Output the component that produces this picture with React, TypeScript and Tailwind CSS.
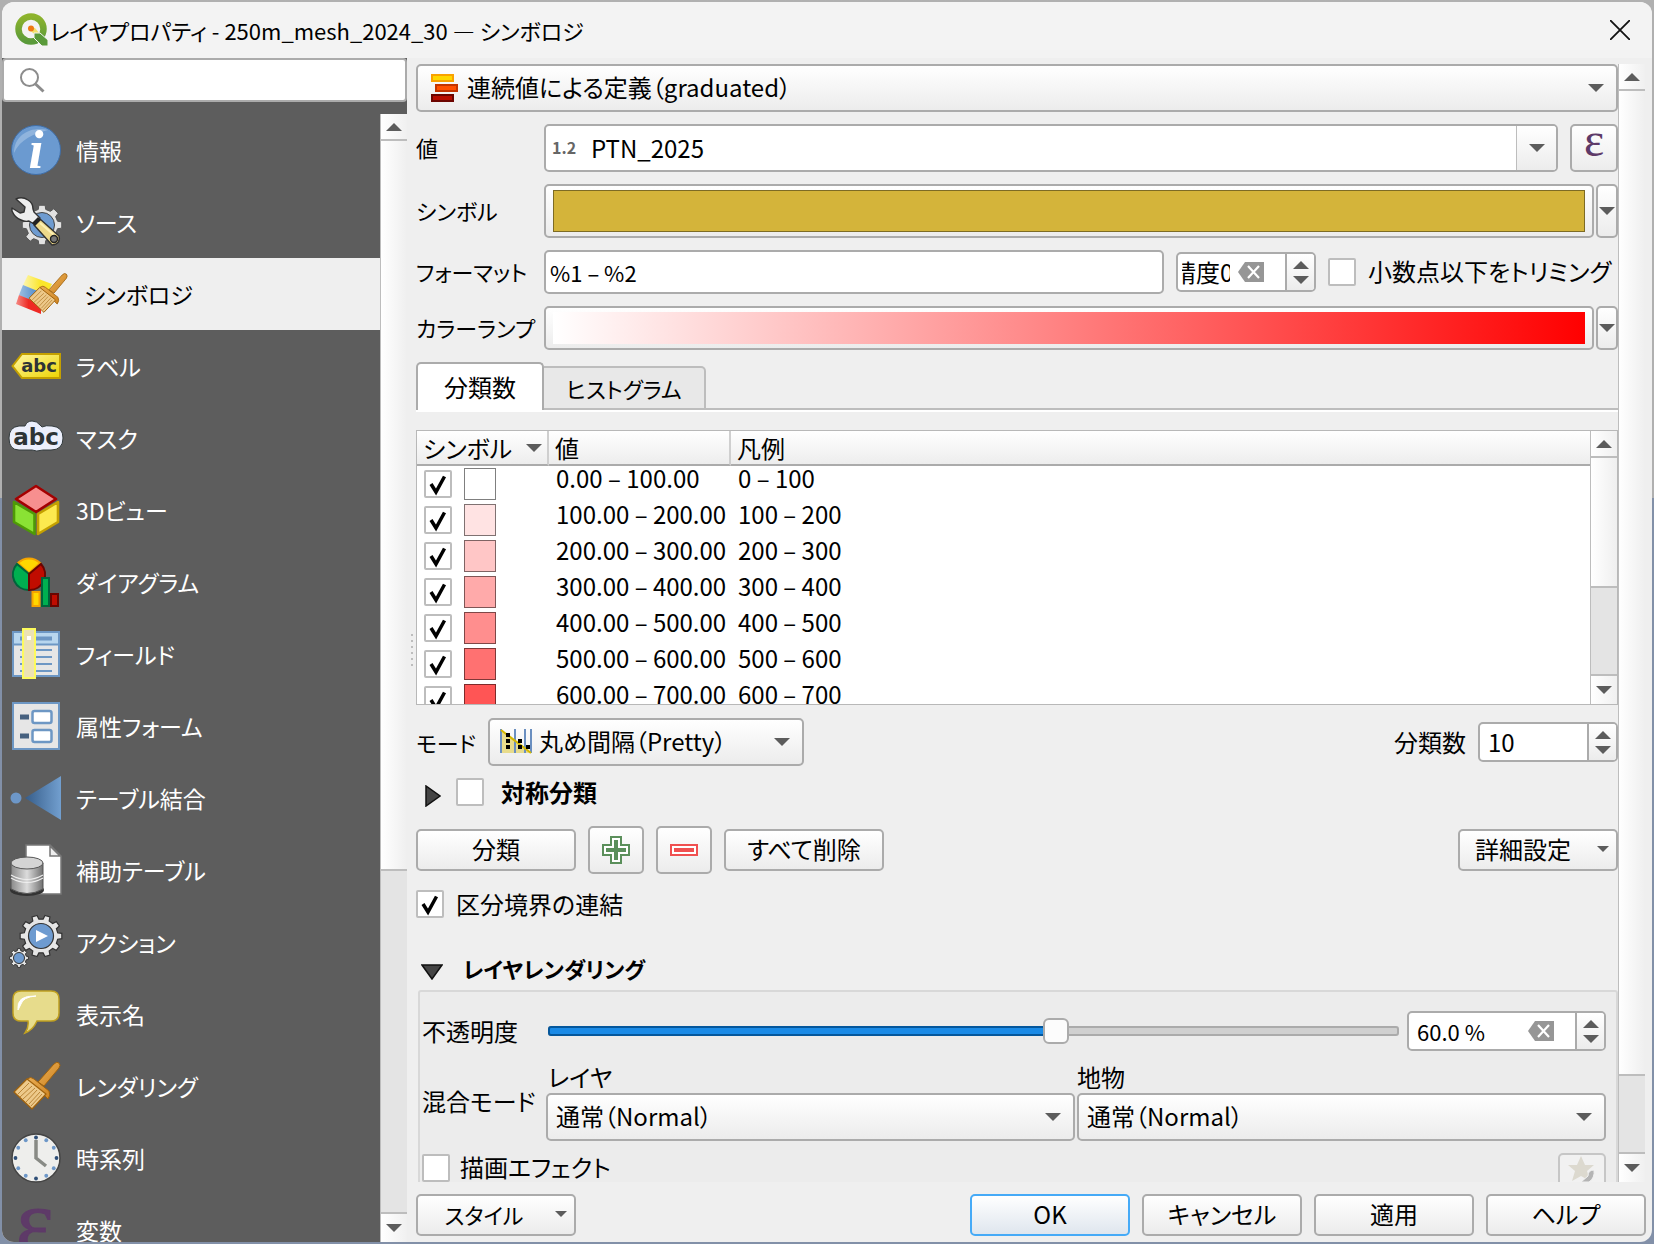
import { useState } from "react";
import type { ReactNode } from "react";

const FACE = "bg-linear-to-b from-white to-[#ececec]";
const BOX = "border-2 border-[#ababab] rounded-[5px]";

/* ---------- small shapes ---------- */

function Arrow({ up, small }: { up?: boolean; small?: boolean }) {
  return (
    <svg
      viewBox="0 0 16 8"
      className={small ? "w-3 h-[6px] shrink-0" : "w-4 h-2 shrink-0"}
      fill="#5c5c5c"
      aria-hidden="true"
    >
      <path d={up ? "M0 8h16L8 0z" : "M0 0h16L8 8z"} />
    </svg>
  );
}

function ClearIcon() {
  return (
    <svg viewBox="0 0 26 20" className="w-[26px] h-5" aria-hidden="true">
      <path d="M7 0h19v20H7L0 10z" fill="#969696" />
      <path d="M10 4l11 12M21 4L10 16" stroke="#fff" strokeWidth="2.2" />
    </svg>
  );
}

function gear(cx: number, cy: number, r: number, depth: number, teeth: number) {
  const pts: string[] = [];
  const step = (Math.PI * 2) / teeth;
  for (let i = 0; i < teeth; i++) {
    const a = i * step;
    [
      [-0.3, r - depth],
      [-0.2, r],
      [0.2, r],
      [0.3, r - depth],
    ].forEach(([f, rad]) => {
      const t = a + f * step;
      pts.push(`${(cx + rad * Math.cos(t)).toFixed(2)} ${(cy + rad * Math.sin(t)).toFixed(2)}`);
    });
  }
  return "M" + pts.join("L") + "Z";
}

/* ---------- sidebar icons ---------- */

function Icon({ children }: { children: ReactNode }) {
  return (
    <svg viewBox="0 0 56 56" className="w-14 h-14 shrink-0" aria-hidden="true">
      {children}
    </svg>
  );
}

function Brush() {
  return (
    <g strokeLinejoin="round">
      <path d="M46 6q3-3 5-1t0 5L36 28l-6-4z" fill="url(#wood)" stroke="#a0620c" strokeWidth="1" />
      <path d="M19 21q4-3 7 0l15 12q2 4-1 8z" fill="url(#wood)" stroke="#a0620c" strokeWidth="1" />
      <path d="M19 21L6 34l18 17 14-15z" fill="#edc98a" stroke="#a0620c" strokeWidth="1.200" />
      <path
        d="M21 25L10 36M24 28L12 39M27 30L15 41M29 32L18 44M32 34L21 46M34 36L23 48"
        stroke="#b98538"
        strokeWidth="1"
      />
    </g>
  );
}

function InfoIcon() {
  return (
    <Icon>
      <circle cx="28" cy="28" r="24.500" fill="#6b9ad0" stroke="#3f6ea8" strokeWidth="1" />
      <path d="M6 31C6 12 24 4 40 8 26 12 12 17 6 31z" fill="#a9c6e6" opacity=".6" />
      <text
        x="28"
        y="46"
        textAnchor="middle"
        fontSize="54"
        fontStyle="italic"
        fontWeight="700"
        fill="#fff"
        fontFamily="Liberation Serif, serif"
      >
        i
      </text>
    </Icon>
  );
}

function SourceIcon() {
  return (
    <Icon>
      <path d={gear(34, 31, 20, 4, 8)} fill="#e2e2e2" stroke="#555" strokeWidth="1" />
      <circle cx="34" cy="31" r="12.500" fill="#6e9bd0" stroke="#444" strokeWidth="1" />
      <path
        d="M8 5q6-3 12 1 5 3 5 9l1 3 6 6-6 6-5-3q-4 1-8-1-6-2-9-9l0-3 8 5 4-1 1-5z"
        fill="#eee"
        stroke="#333"
        strokeWidth="1.400"
        strokeLinejoin="round"
      />
      <path d="M26 31l6-6 19 17q2 8-7 9z" fill="#eed98a" stroke="#333" strokeWidth="1.400" strokeLinejoin="round" />
      <path d="M24 29l6-6 3 3-6 6z" fill="#222" />
      <path d="M32 29l14 12" stroke="#fdf0b4" strokeWidth="2" />
      <circle cx="46" cy="45" r="3.500" fill="#777" stroke="#222" strokeWidth="1.400" />
    </Icon>
  );
}

function SymbologyIcon() {
  return (
    <Icon>
      <path d="M12 9l24 9-6 12L7 19z" fill="url(#ylw)" />
      <path d="M7 19l22 9-6 12L3 29z" fill="url(#sky)" />
      <path d="M3 29l22 9 0 10L0 38z" fill="url(#red)" />
      <g transform="translate(8 4) scale(.83)">
        <Brush />
      </g>
    </Icon>
  );
}

function LabelIcon() {
  return (
    <Icon>
      <path d="M4.500 28L14 16h38v24H14z" fill="url(#ylw2)" stroke="#c4a000" strokeWidth="2" />
      <text
        x="31"
        y="34"
        textAnchor="middle"
        fontSize="18"
        fontWeight="700"
        fill="#2e3436"
        fontFamily="DejaVu Sans, sans-serif"
      >
        abc
      </text>
    </Icon>
  );
}

function MaskIcon() {
  return (
    <Icon>
      <path
        d="M11 16h6q2-5 7-5t8 4l2 2q4-2 10-1 11 1 11 12 0 12-12 12H35q-7 2-11 0H11Q1 40 1 28q0-11 10-12z"
        fill="#eceffc"
        stroke="#333b3d"
        strokeWidth="1"
      />
      <text
        x="28"
        y="35"
        textAnchor="middle"
        fontSize="23"
        fontWeight="700"
        fill="#2e3436"
        fontFamily="DejaVu Sans, sans-serif"
      >
        abc
      </text>
    </Icon>
  );
}

function CubeIcon() {
  return (
    <Icon>
      <g strokeWidth="2.600" strokeLinejoin="round">
        <path d="M28 4l20 13-20 13L8 17z" fill="#f78f8f" stroke="#a40000" />
        <path d="M6 20l20.500 12v20L6 40z" fill="#8ae234" stroke="#4e9a06" />
        <path d="M50 20L30 32v20l20-12z" fill="#fce94f" stroke="#c4a000" />
      </g>
    </Icon>
  );
}

function DiagramIcon() {
  return (
    <Icon>
      <path d="M21 19L10 9A15.500 15.500 0 0 1 32 9z" fill="#ffd700" stroke="#f5a400" strokeWidth="2" />
      <path d="M21 20v16A15.500 15.500 0 0 1 9 10z" fill="#00b050" stroke="#00643c" strokeWidth="2" />
      <path d="M21 20v16A15.500 15.500 0 0 0 33 10z" fill="#c00c00" stroke="#6a0500" strokeWidth="2" />
      <path d="M24.500 38h7v14h-7z" fill="#ffd700" stroke="#f5a400" strokeWidth="2" />
      <path d="M34 24h7v28h-7z" fill="#00b050" stroke="#00643c" strokeWidth="2" />
      <path d="M43 40h7v12h-7z" fill="#c00c00" stroke="#6a0500" strokeWidth="2" />
    </Icon>
  );
}

function FieldsIcon() {
  return (
    <Icon>
      <path d="M5 6h46v44H5z" fill="#e6e6e6" stroke="#6d97c4" strokeWidth="2" />
      <path d="M6 7h44v12H6z" fill="#b8d6ee" />
      <path d="M6 18.500h44" stroke="#6d97c4" strokeWidth="2" />
      <path d="M12 12.500h32" stroke="#6d97c4" strokeWidth="4" />
      <path d="M12 24h32M12 31h32M12 38h32M12 45h32" stroke="#6d97c4" strokeWidth="2" />
      <path d="M15 3h12v49H15z" fill="#ece2b4" stroke="#fdfb5c" strokeWidth="2" />
      <path d="M19 10h4v4h-4z" fill="#fff" />
    </Icon>
  );
}

function FormIcon() {
  return (
    <Icon>
      <path d="M5 5h46v46H5z" fill="#e6e6e6" stroke="#6d97c4" strokeWidth="2" />
      <path d="M12 19h9M12 38h9" stroke="#46617f" strokeWidth="5" />
      <rect x="24.500" y="13" width="19" height="12" rx="2" fill="#fff" stroke="#6d97c4" strokeWidth="2.500" />
      <rect x="24.500" y="32" width="19" height="12" rx="2" fill="#fff" stroke="#6d97c4" strokeWidth="2.500" />
    </Icon>
  );
}

function JoinIcon() {
  return (
    <Icon>
      <circle cx="8" cy="28" r="5.500" fill="#6d97c8" />
      <path d="M17 28L53 6v44z" fill="url(#blue)" />
    </Icon>
  );
}

function StorageIcon() {
  return (
    <Icon>
      <path d="M18 3h24l11 11v38H18z" fill="#fff" stroke="#777" strokeWidth="1.500" />
      <path d="M42 4v10h10z" fill="#eee" stroke="#777" strokeWidth="1.500" />
      <ellipse cx="19" cy="48" rx="17" ry="6" fill="#333" />
      <path d="M3 21v26q16 9 32 0V21z" fill="url(#metal)" stroke="#555" strokeWidth="1" />
      <path d="M3 33q16 9 32 0M3 36q16 9 32 0" fill="none" stroke="#eee" strokeWidth="1.200" />
      <ellipse cx="19" cy="21" rx="16" ry="6" fill="#d4d4d4" stroke="#555" strokeWidth="1" />
    </Icon>
  );
}

function ActionIcon() {
  return (
    <Icon>
      <path d={gear(33, 22, 21, 4, 10)} fill="#e6e6e6" stroke="#333" strokeWidth="1.200" />
      <circle cx="33" cy="22" r="12.500" fill="#6e9bd0" stroke="#333" strokeWidth="1.200" />
      <path d="M28 16l12 6-12 6z" fill="#fff" />
      <path d={gear(11, 44, 9.5, 2, 8)} fill="#e6e6e6" stroke="#333" strokeWidth="1" />
      <circle cx="11" cy="44" r="5.500" fill="#6e9bd0" stroke="#333" strokeWidth="1" />
    </Icon>
  );
}

function DisplayIcon() {
  return (
    <Icon>
      <path
        d="M13 5h30q8 0 8 8v14q0 8-8 8H29q-4 9-12 12 4-6 3-12h-7q-8 0-8-8V13q0-8 8-8z"
        fill="#e7dc8c"
        stroke="#c0a020"
        strokeWidth="1.500"
      />
      <path d="M10 24q-2-15 18-14-13 1-15 8z" fill="#fff" stroke="#fff" strokeWidth="1" />
    </Icon>
  );
}

function RenderIcon() {
  return (
    <Icon>
      <Brush />
    </Icon>
  );
}

function ClockIcon() {
  return (
    <Icon>
      <circle cx="28" cy="28" r="24" fill="#eeeeec" stroke="#444" strokeWidth="1.500" />
      {Array.from({ length: 12 }, (_, i) => {
        const a = (i * Math.PI) / 6;
        return (
          <circle
            key={i}
            cx={28 + 20.5 * Math.cos(a)}
            cy={28 + 20.5 * Math.sin(a)}
            r="1.900"
            fill={i % 3 ? "#6d97c8" : "#2f4f78"}
          />
        );
      })}
      <path d="M28 10v18l10 8" fill="none" stroke="#888a85" strokeWidth="3.500" />
    </Icon>
  );
}

function VariableIcon() {
  return (
    <Icon>
      <text
        x="27"
        y="50"
        textAnchor="middle"
        fontSize="90"
        fill="#5e3a68"
        stroke="#5e3a68"
        fontFamily="Liberation Serif, serif"
      >
        ε
      </text>
    </Icon>
  );
}

function Gradients() {
  return (
    <svg className="absolute w-0 h-0" aria-hidden="true">
      <defs>
        <linearGradient id="wood" x1="0" y1="0" x2="1" y2="1">
          <stop offset="0" stopColor="#e9ad55" />
          <stop offset="1" stopColor="#cf8420" />
        </linearGradient>
        <linearGradient id="ylw" x1="0" y1="0" x2="1" y2="0">
          <stop offset="0" stopColor="#fdf6b0" />
          <stop offset=".6" stopColor="#fbe62a" />
        </linearGradient>
        <linearGradient id="sky" x1="0" y1="0" x2="1" y2="0">
          <stop offset="0" stopColor="#9dbfe2" />
          <stop offset=".6" stopColor="#5c93cf" />
        </linearGradient>
        <linearGradient id="red" x1="0" y1="0" x2="1" y2="0">
          <stop offset="0" stopColor="#f58a84" />
          <stop offset=".5" stopColor="#ee2a24" />
        </linearGradient>
        <linearGradient id="ylw2" x1="0" y1="0" x2="1" y2="1">
          <stop offset="0" stopColor="#fff8a8" />
          <stop offset="1" stopColor="#edd400" />
        </linearGradient>
        <linearGradient id="blue" x1="0" y1="0" x2="1" y2="0">
          <stop offset="0" stopColor="#365d8a" />
          <stop offset="1" stopColor="#729fcf" />
        </linearGradient>
        <linearGradient id="metal" x1="0" y1="0" x2="1" y2="0">
          <stop offset="0" stopColor="#8a8a8a" />
          <stop offset=".5" stopColor="#dcdcdc" />
          <stop offset="1" stopColor="#707070" />
        </linearGradient>
        <linearGradient id="leaf" x1="0" y1="0" x2="0" y2="1">
          <stop offset="0" stopColor="#8db32c" />
          <stop offset="1" stopColor="#5a9a3a" />
        </linearGradient>
      </defs>
    </svg>
  );
}

const pages = [
  { name: "情報", icon: <InfoIcon /> },
  { name: "ソース", icon: <SourceIcon /> },
  { name: "シンボロジ", icon: <SymbologyIcon /> },
  { name: "ラベル", icon: <LabelIcon /> },
  { name: "マスク", icon: <MaskIcon /> },
  { name: "3Dビュー", icon: <CubeIcon /> },
  { name: "ダイアグラム", icon: <DiagramIcon /> },
  { name: "フィールド", icon: <FieldsIcon /> },
  { name: "属性フォーム", icon: <FormIcon /> },
  { name: "テーブル結合", icon: <JoinIcon /> },
  { name: "補助テーブル", icon: <StorageIcon /> },
  { name: "アクション", icon: <ActionIcon /> },
  { name: "表示名", icon: <DisplayIcon /> },
  { name: "レンダリング", icon: <RenderIcon /> },
  { name: "時系列", icon: <ClockIcon /> },
  { name: "変数", icon: <VariableIcon /> },
];

const classes = [
  { value: "0.00 – 100.00", legend: "0 – 100", color: "#ffffff" },
  { value: "100.00 – 200.00", legend: "100 – 200", color: "#ffe3e3" },
  { value: "200.00 – 300.00", legend: "200 – 300", color: "#ffc6c6" },
  { value: "300.00 – 400.00", legend: "300 – 400", color: "#ffaaaa" },
  { value: "400.00 – 500.00", legend: "400 – 500", color: "#ff8e8e" },
  { value: "500.00 – 600.00", legend: "500 – 600", color: "#ff7171" },
  { value: "600.00 – 700.00", legend: "600 – 700", color: "#ff5555" },
];

/* ---------- controls ---------- */

function ScrollBar({ handle, rest }: { handle: string; rest: string }) {
  return (
    <div className="w-[27px] shrink-0 flex flex-col border-l border-[#bdbdbd] bg-[#e4e4e4]">
      <button aria-label="上へ" className="h-[25px] shrink-0 grid place-items-center bg-linear-to-r from-white to-[#f0f0f0]">
        <Arrow up />
      </button>
      <div className={`${handle} border-y-2 border-[#bdbdbd] bg-linear-to-r from-white to-[#efefef]`} />
      <div className={rest} />
      <button
        aria-label="下へ"
        className="h-[30px] shrink-0 grid place-items-center border-t-2 border-[#bdbdbd] bg-linear-to-r from-white to-[#f0f0f0]"
      >
        <Arrow />
      </button>
    </div>
  );
}

function Check({ id, checked = false, label }: { id?: string; checked?: boolean; label?: string }) {
  return (
    <span className="relative w-7 h-7 shrink-0 block">
      <input
        id={id}
        type="checkbox"
        aria-label={label}
        defaultChecked={checked}
        className="peer appearance-none block w-7 h-7 bg-white border-2 border-[#bdbdbd] rounded-[2px]"
      />
      <svg viewBox="0 0 28 28" className="absolute inset-0 hidden peer-checked:block pointer-events-none">
        <path d="M7 14l5 8L20.500 6.500" fill="none" stroke="#000" strokeWidth="3.500" />
      </svg>
    </span>
  );
}

function Combo({ id, label, text, icon, pad = "pl-2" }: { id?: string; label?: string; text: string; icon?: ReactNode; pad?: string }) {
  return (
    <div className="relative w-full">
      <select id={id} aria-label={label} className={`appearance-none block w-full h-12 pb-[2px] ${pad} ${BOX} ${FACE}`}>
        <option>{text}</option>
      </select>
      {icon && <span className="absolute left-3 inset-y-0 flex items-center pointer-events-none">{icon}</span>}
      <span className="absolute right-[14px] inset-y-0 flex items-center pointer-events-none">
        <Arrow />
      </span>
    </div>
  );
}

function Spin({ children, width }: { children: ReactNode; width: string }) {
  return (
    <div className={`${width} h-10 shrink-0 flex bg-white overflow-hidden ${BOX}`}>
      <div className="flex-1 min-w-0 flex items-center border-r-2 border-[#ababab]">{children}</div>
      <div className={`w-[27px] shrink-0 flex flex-col items-center justify-center gap-[7px] ${FACE}`}>
        <button aria-label="増やす" className="block">
          <Arrow up />
        </button>
        <button aria-label="減らす" className="block">
          <Arrow />
        </button>
      </div>
    </div>
  );
}

function PushButton({ children, primary }: { children: ReactNode; primary?: boolean }) {
  return (
    <button
      className={
        primary
          ? "w-40 h-[42px] pb-[2px] flex items-center justify-center border-2 border-[#45aaf7] rounded-[5px] bg-linear-to-b from-white to-[#dfe6ee]"
          : `w-40 h-[42px] pb-[2px] flex items-center justify-center ${BOX} ${FACE}`
      }
    >
      {children}
    </button>
  );
}

function FormRow({ id, label, children }: { id: string; label: string; children: ReactNode }) {
  return (
    <div className="flex items-center">
      <label htmlFor={id} className="w-32 shrink-0 pb-[2px] text-[22px] leading-8 whitespace-nowrap">
        {label}
      </label>
      {children}
    </div>
  );
}

function SwatchButton({ id, height, children }: { id: string; height: string; children: ReactNode }) {
  return (
    <div className="flex-1 flex gap-[2px]">
      <button id={id} className={`flex-1 ${height} px-[7px] py-1 ${BOX} ${FACE}`}>
        {children}
      </button>
      <button aria-label="メニュー" className={`w-[22px] ${height} grid place-items-center ${BOX} ${FACE}`}>
        <Arrow />
      </button>
    </div>
  );
}

/* ---------- parts of the window ---------- */

function TitleBar() {
  return (
    <header className="h-14 shrink-0 flex items-center justify-between pl-3 pr-[22px] bg-[#f3f3f3]">
      <div className="flex items-center gap-[2px]">
        <svg viewBox="0 0 34 34" className="w-[34px] h-[34px]" aria-hidden="true">
          <circle cx="17" cy="16" r="12.500" fill="none" stroke="url(#leaf)" strokeWidth="6.500" />
          <path d="M16 14l5 1 5 6-4 2-6-6z" fill="#f2e16a" />
          <circle cx="17" cy="15.500" r="3" fill="#ee7913" />
          <path d="M20 20h6l8 7v6h-6l-8-8z" fill="#5a9a3a" stroke="#f3f3f3" strokeWidth="1" />
        </svg>
        <h1 className="text-[22px]">レイヤプロパティ - 250m_mesh_2024_30 — シンボロジ</h1>
      </div>
      <button aria-label="閉じる">
        <svg viewBox="0 0 20 20" className="w-5 h-5">
          <path d="M0 0l20 20M20 0L0 20" stroke="#111" strokeWidth="1.800" />
        </svg>
      </button>
    </header>
  );
}

function Sidebar() {
  const [active, setActive] = useState("シンボロジ");
  return (
    <aside className="w-[405px] shrink-0 flex flex-col bg-[#5d5d5d] overflow-hidden">
      <div className="relative shrink-0">
        <input
          type="search"
          aria-label="検索"
          className="block w-full h-11 pl-12 bg-white border-2 border-[#ababab] rounded-[4px]"
        />
        <svg viewBox="0 0 26 26" className="absolute left-[17px] top-[9px] w-[26px] h-[26px] pointer-events-none">
          <circle cx="10.500" cy="10.500" r="8.500" fill="none" stroke="#8c8c8c" strokeWidth="2" />
          <path d="M16.500 17l8 7.500" stroke="#8c8c8c" strokeWidth="3" />
        </svg>
      </div>
      <div className="flex-1 min-h-0 flex pt-3">
        <nav className="flex-1 overflow-hidden text-[23px]">
          {pages.map((p) => (
            <button
              key={p.name}
              onClick={() => setActive(p.name)}
              className={
                p.name === active
                  ? "w-full h-[72px] flex items-center gap-3 pl-[14px] bg-[#efefef] text-black"
                  : "w-full h-[72px] flex items-center gap-3 pl-[6px] text-white"
              }
            >
              {p.icon}
              {p.name}
            </button>
          ))}
        </nav>
        <ScrollBar handle="flex-[731]" rest="flex-[342]" />
      </div>
    </aside>
  );
}

function ClassTable() {
  return (
    <div className="h-[275px] flex bg-white border border-[#b8b8b8] overflow-hidden">
      <div className="flex-1 overflow-hidden">
        <table className="w-full table-fixed border-separate border-spacing-0 text-left">
          <colgroup>
            <col className="w-[132px]" />
            <col className="w-[182px]" />
            <col />
          </colgroup>
          <thead>
            <tr className={FACE}>
              <th className="h-[35px] p-0 pl-[6px] font-normal leading-8 border-b-2 border-r-2 border-b-[#ababab] border-r-[#cfcfcf]">
                <span className="flex items-center justify-between pr-[5px]">
                  シンボル
                  <Arrow />
                </span>
              </th>
              <th className="p-0 pl-[6px] font-normal leading-8 border-b-2 border-r-2 border-b-[#ababab] border-r-[#cfcfcf]">
                値
              </th>
              <th className="p-0 pl-[6px] font-normal leading-8 border-b-2 border-b-[#ababab]">凡例</th>
            </tr>
          </thead>
          <tbody>
            {classes.map((c) => (
              <tr key={c.value} className="align-top">
                <td className="h-9 p-0 pl-[7px]">
                  <div className="flex items-center gap-3 h-9">
                    <Check label={c.legend} checked />
                    <span className="w-8 h-8 border border-black/50" style={{ backgroundColor: c.color }} />
                  </div>
                </td>
                <td className="p-0 pl-[7px] leading-6 whitespace-nowrap">{c.value}</td>
                <td className="p-0 pl-[7px] leading-6 whitespace-nowrap">{c.legend}</td>
              </tr>
            ))}
          </tbody>
        </table>
      </div>
      <ScrollBar handle="flex-[130]" rest="flex-[88]" />
    </div>
  );
}

function LayerRendering() {
  const [opacity, setOpacity] = useState(60);
  return (
    <section>
      <h2 className="flex items-center gap-5 h-[72px] pt-7 pl-[5px] font-bold text-[22px]">
        <svg viewBox="0 0 22 16" className="w-[22px] h-4 mt-2" aria-hidden="true">
          <path d="M1 1h20L11 15z" fill="#444" stroke="#111" strokeWidth="1.500" />
        </svg>
        レイヤレンダリング
      </h2>
      <div className="ml-[2px] pt-[19px] pl-[2px] pr-[10px] pb-4 border-2 border-[#d8d8d8] rounded-[3px] bg-[#ececec]">
        <div className="flex items-center">
          <label htmlFor="opacity" className="w-[126px] shrink-0 whitespace-nowrap">
            不透明度
          </label>
          <div className="relative flex-1 h-[26px] flex items-center">
            <div className="w-full h-[10px] border-2 border-[#ababab] rounded-[3px] bg-[#d0d0d0]" />
            <div
              className="absolute left-0 h-[10px] border-2 border-[#04579c] rounded-[3px] bg-[#1a8ae6]"
              style={{ width: `${opacity}%` }}
            />
            <input
              id="opacity"
              type="range"
              min={0}
              max={100}
              value={opacity}
              onChange={(e) => setOpacity(Number(e.target.value))}
              className="absolute inset-0 w-full h-[26px] appearance-none bg-transparent [&::-webkit-slider-thumb]:appearance-none [&::-webkit-slider-thumb]:w-[26px] [&::-webkit-slider-thumb]:h-[26px] [&::-webkit-slider-thumb]:rounded-[6px] [&::-webkit-slider-thumb]:border-2 [&::-webkit-slider-thumb]:border-[#ababab] [&::-webkit-slider-thumb]:bg-[#fcfcfc]"
            />
          </div>
          <div className="w-2 shrink-0" />
          <Spin width="w-[199px]">
            <input aria-label="不透明度の値" defaultValue="60.0 %" className="flex-1 min-w-0 pl-2 text-[22px]" />
            <button aria-label="クリア" className="mr-[21px]">
              <ClearIcon />
            </button>
          </Spin>
        </div>
        <div className="flex items-center mt-[10px]">
          <div className="w-[124px] shrink-0 whitespace-nowrap">混合モード</div>
          <div className="flex-1 grid grid-cols-2 gap-x-[2px]">
            <label htmlFor="blend-layer" className="pl-[2px] leading-8">
              レイヤ
            </label>
            <label htmlFor="blend-feature" className="leading-8">
              地物
            </label>
            <Combo id="blend-layer" text="通常（Normal）" />
            <Combo id="blend-feature" text="通常（Normal）" />
          </div>
        </div>
        <div className="flex items-start justify-between mt-3">
          <div className="flex items-center gap-[10px] h-[30px]">
            <Check id="effects" />
            <label htmlFor="effects" className="pb-[2px]">
              描画エフェクト
            </label>
          </div>
          <button aria-label="エフェクトの設定" className="w-12 h-12 flex justify-center border-2 border-[#c6c6c6] rounded-[5px] bg-[#f1f1f1]">
            <svg viewBox="0 0 30 32" className="w-[30px] h-8">
              <path d="M14 1l4 9h9l-7 6 3 10-9-5-9 5 3-10-7-6h9z" fill="#dcd9cf" />
              <path d="M27 15q-6 0-6 6l-7 6h8q6-4 5-12z" fill="#b4b4b4" stroke="#f1f1f1" strokeWidth="1" />
            </svg>
          </button>
        </div>
      </div>
    </section>
  );
}

function SymbologyForm() {
  return (
    <div className="flex-1 min-w-0 overflow-hidden">
      <div className="flex flex-col gap-3">
        <Combo
          label="レンダラ"
          text="連続値による定義（graduated）"
          pad="pl-[49px]"
          icon={
            <svg viewBox="0 0 28 28" className="w-7 h-7 ml-[3px]" aria-hidden="true">
              <path d="M1 1h21v6H1z" fill="#ffd700" stroke="#f9a200" strokeWidth="2" />
              <path d="M5 11h21v6H5z" fill="#ff4f00" stroke="#c43400" strokeWidth="2" />
              <path d="M1 21h21v6H1z" fill="#b80c00" stroke="#6c0500" strokeWidth="2" />
            </svg>
          }
        />

        <FormRow id="value" label="値">
          <div className={`flex-1 h-12 flex items-center bg-white overflow-hidden ${BOX}`}>
            <span className="pl-[6px] pb-[2px] w-[45px] text-base font-bold text-[#666]">1.2</span>
            <input id="value" defaultValue="PTN_2025" className="flex-1 min-w-0 h-full pb-[2px]" />
            <button
              aria-label="フィールドを選択"
              className={`w-10 h-full grid place-items-center border-l border-[#bdbdbd] ${FACE}`}
            >
              <Arrow />
            </button>
          </div>
          <button
            aria-label="式"
            className={`ml-3 w-12 h-12 pb-4 flex items-center justify-center text-5xl leading-8 text-[#5e3a68] font-['Liberation_Serif',serif] ${BOX} ${FACE}`}
          >
            ε
          </button>
        </FormRow>

        <FormRow id="symbol" label="シンボル">
          <SwatchButton id="symbol" height="h-[54px]">
            <span className="block w-full h-full bg-[#d4b43a] border border-[#7d6b24]" />
          </SwatchButton>
        </FormRow>

        <FormRow id="format" label="フォーマット">
          <input id="format" defaultValue="%1 – %2" className={`flex-1 min-w-0 h-11 pl-1 bg-white text-[22px] ${BOX}`} />
          <div className="w-3 shrink-0" />
          <Spin width="w-[140px]">
            <span className="w-12 ml-1 flex justify-center overflow-hidden">
              <input aria-label="精度" defaultValue="精度0" className="w-[68px] shrink-0" />
            </span>
            <button aria-label="クリア" className="ml-2">
              <ClearIcon />
            </button>
          </Spin>
          <span className="ml-3 mr-3">
            <Check id="trim" />
          </span>
          <label htmlFor="trim" className="w-[250px] pb-[2px] whitespace-nowrap">
            小数点以下をトリミング
          </label>
        </FormRow>

        <FormRow id="ramp" label="カラーランプ">
          <SwatchButton id="ramp" height="h-11">
            <span className="block w-full h-full bg-linear-to-r/srgb from-white to-[#ff0000]" />
          </SwatchButton>
        </FormRow>
      </div>

      <div role="tablist" className="mt-3 h-[50px] flex items-end border-b-2 border-white">
        <button
          role="tab"
          aria-selected="true"
          className="w-32 h-12 bg-white border-2 border-b-0 border-[#ababab] rounded-t-[5px]"
        >
          分類数
        </button>
        <button
          role="tab"
          aria-selected="false"
          className="w-[162px] h-11 border-2 border-l-0 border-[#bdbdbd] rounded-tr-[5px] bg-[#e8e8e8] text-[22px]"
        >
          ヒストグラム
        </button>
        <div className="flex-1 border-b-2 border-[#bdbdbd]" />
      </div>

      <div className="mt-[18px]">
        <ClassTable />
      </div>

      <div className="mt-[13px] flex items-center justify-between">
        <div className="flex items-center">
          <label htmlFor="mode" className="w-[72px] text-[22px] whitespace-nowrap">
            モード
          </label>
          <div className="w-[316px]">
            <Combo
              id="mode"
              text="丸め間隔（Pretty）"
              pad="pl-[49px]"
              icon={
                <svg viewBox="0 0 32 26" className="w-8 h-[26px]" aria-hidden="true">
                  <path d="M1 1l29 23H1z" fill="#e8dc8c" />
                  <path d="M1 0v24M15 0v24M25 0v24M31 0v24" stroke="#6a8fc0" strokeWidth="2" />
                  <path d="M1 1l30 23" stroke="#d4b800" strokeWidth="2" />
                  <path d="M6 4h4v4H6zM6 10h4v4H6zM6 16h4v4H6zM18 10h4v4h-4zM18 16h4v4h-4zM26 16h4v4h-4z" fill="#000" />
                </svg>
              }
            />
          </div>
        </div>
        <div className="flex items-center gap-3">
          <label htmlFor="classes">分類数</label>
          <Spin width="w-[140px]">
            <input id="classes" defaultValue="10" className="w-full pl-2" />
          </Spin>
        </div>
      </div>

      <div className="mt-3 h-7 flex items-center pl-[9px]">
        <svg viewBox="0 0 16 22" className="w-4 h-[22px] mt-2" aria-hidden="true">
          <path d="M1 1v20l14-10z" fill="#444" stroke="#111" strokeWidth="1.500" />
        </svg>
        <span className="ml-[15px] mr-[17px]">
          <Check id="symmetric" />
        </span>
        <label htmlFor="symmetric" className="font-bold">
          対称分類
        </label>
      </div>

      <div className="mt-5 h-12 flex items-center gap-3">
        <PushButton>分類</PushButton>
        <button aria-label="追加" className={`w-14 h-12 grid place-items-center ${BOX} ${FACE}`}>
          <svg viewBox="0 0 28 28" className="w-7 h-7">
            <path d="M9 1h10v8h8v10h-8v8H9v-8H1V9h8z" fill="#fff" stroke="#5b8f5b" strokeWidth="2" />
            <path d="M14 4v20M4 14h20" stroke="#5b8f5b" strokeWidth="4" />
          </svg>
        </button>
        <button aria-label="削除" className={`w-14 h-12 grid place-items-center ${BOX} ${FACE}`}>
          <svg viewBox="0 0 28 28" className="w-7 h-7">
            <path d="M1 9h26v10H1z" fill="#fff" stroke="#f05050" strokeWidth="2" />
            <path d="M4 14h20" stroke="#f05050" strokeWidth="4" />
          </svg>
        </button>
        <PushButton>すべて削除</PushButton>
        <div className="flex-1" />
        <PushButton>
          <span className="ml-2 mr-[26px]">詳細設定</span>
          <Arrow small />
        </PushButton>
      </div>

      <div className="mt-4 h-7 flex items-center gap-3">
        <Check id="link" checked />
        <label htmlFor="link">区分境界の連結</label>
      </div>

      <LayerRendering />
    </div>
  );
}

export default function App() {
  return (
    <div
      lang="ja"
      className="h-screen p-[2px] overflow-hidden bg-linear-to-b from-[#b0b0b0] from-40% to-[#8290a8] to-40% text-2xl leading-8 text-black font-['Noto_Sans_CJK_JP',sans-serif] [font-feature-settings:'palt']"
    >
      <Gradients />
      <div className="h-full flex flex-col rounded-[12px] overflow-hidden bg-[#efefef]">
        <TitleBar />
        <div className="flex-1 min-h-0 flex">
          <Sidebar />
          <div className="w-[9px] shrink-0 flex flex-col items-center justify-center gap-1">
            {[0, 1, 2, 3, 4, 5].map((i) => (
              <span key={i} className="w-[2px] h-[2px] bg-[#bdbdbd]" />
            ))}
          </div>
          <main className="flex-1 min-w-0 flex flex-col">
            <div className="flex-1 min-h-0 flex pt-[6px] pr-[7px]">
              <SymbologyForm />
              <ScrollBar handle="flex-[987]" rest="flex-[76]" />
            </div>
            <footer className="shrink-0 pt-3 pb-[6px] pr-[6px] flex gap-3">
              <PushButton>
                <span className="ml-5 mr-8 text-[22px]">スタイル</span>
                <Arrow small />
              </PushButton>
              <div className="flex-1" />
              <PushButton primary>OK</PushButton>
              <PushButton>キャンセル</PushButton>
              <PushButton>適用</PushButton>
              <PushButton>ヘルプ</PushButton>
            </footer>
          </main>
        </div>
      </div>
    </div>
  );
}
